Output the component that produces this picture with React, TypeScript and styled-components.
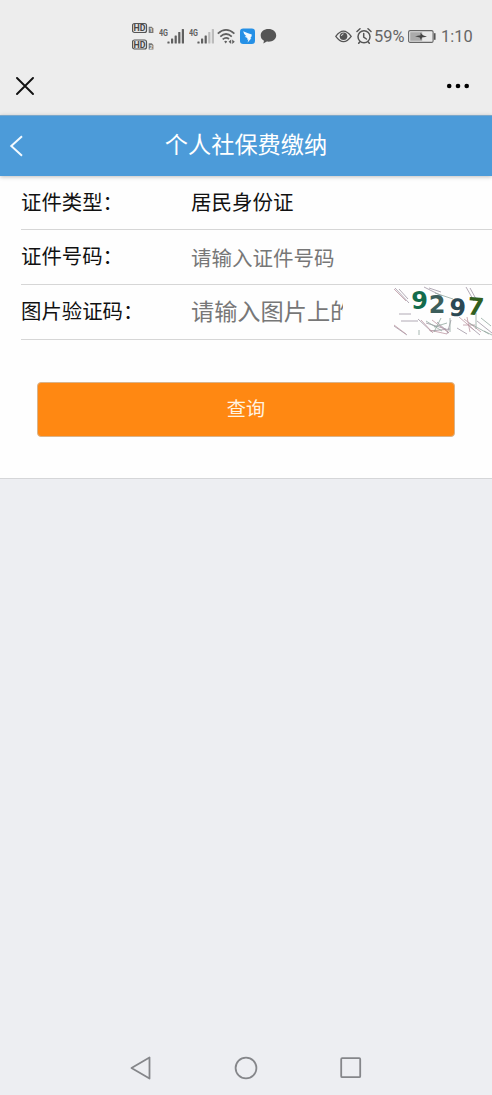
import React from 'react';
import styled, { createGlobalStyle } from 'styled-components';

const GlobalStyle = createGlobalStyle`
  * { box-sizing: border-box; }
  body {
    margin: 0;
    background: #edeef2;
    font-family: 'Noto Sans CJK SC', sans-serif;
  }
`;

const Screen = styled.div`
  width: 100%;
  height: 1095px;
  display: flex;
  flex-direction: column;
  background: #edeef2;
  overflow: hidden;
`;

const StatusBar = styled.div`
  height: 58px;
  padding: 22px 19px 6px 132px;
  display: flex;
  justify-content: space-between;
  background: #ededed;
`;

const StatusGroup = styled.div`
  display: flex;
  height: 30px;
`;

const StatusIcon = styled.svg<{ $gap?: number }>`
  display: block;
  flex: none;
  height: 30px;
  margin-left: ${(p) => p.$gap ?? 0}px;
`;

const StatusText = styled.span<{ $width: number; $gap: number }>`
  width: ${(p) => p.$width}px;
  margin-left: ${(p) => p.$gap}px;
  font: 400 16.4px/30px Roboto, sans-serif;
  color: #666;
  white-space: nowrap;
`;

const BrowserBar = styled.div`
  height: 57px;
  padding: 0 22px 2px 16px;
  display: flex;
  align-items: center;
  justify-content: space-between;
  background: #ededed;
`;

const Header = styled.header`
  height: 61px;
  flex: none;
  display: grid;
  grid-template-columns: 40px 1fr 40px;
  align-items: center;
  background: #4c9bd9;
  border-top: 1px solid #7ba8cb;
  box-shadow: 0 1px 4px rgba(0, 0, 0, 0.25);
  z-index: 1;
`;

const BackIcon = styled.svg`
  display: block;
  margin-left: 9px;
`;

const Title = styled.h1`
  margin: 0;
  padding-bottom: 7px;
  font-size: 23.2px;
  line-height: 34px;
  font-weight: 400;
  text-align: center;
  color: #fff;
`;

const Form = styled.main`
  height: 303px;
  flex: none;
  background: #fefefe;
  border-bottom: 1px solid #d5d6d8;
`;

const Row = styled.div<{ $height?: number }>`
  height: ${(p) => p.$height ?? 55}px;
  margin-left: 21px;
  display: flex;
  align-items: center;
  border-bottom: 1px solid #d6d6d6;
`;

const Label = styled.label`
  width: 170px;
  font-size: 20.4px;
  line-height: 30px;
  color: #111;
  white-space: nowrap;
  padding-bottom: 4px;
`;

const Value = styled.div<{ $hint?: boolean; $large?: boolean }>`
  width: ${(p) => (p.$large ? '152px' : 'auto')};
  overflow: hidden;
  white-space: nowrap;
  font-size: ${(p) => (p.$large ? 23.2 : 20.5)}px;
  line-height: 34px;
  padding-bottom: ${(p) => (p.$hint && !p.$large ? 1 : 4)}px;
  color: ${(p) => (p.$hint ? '#777' : '#111')};
`;

const Captcha = styled.svg`
  display: block;
  margin-left: auto;
`;

const SubmitButton = styled.button`
  display: block;
  width: 418px;
  height: 55px;
  margin: 42px 0 0 37px;
  padding: 0 0 3px;
  border: 1px solid #d9b48c;
  border-radius: 4px;
  background: #ff8812;
  color: #fff4e2;
  font: 400 19.2px/30px 'Noto Sans CJK SC', sans-serif;
`;

const NavBar = styled.nav`
  margin-top: auto;
  height: 54px;
  padding: 0 130px;
  display: flex;
  align-items: center;
  justify-content: space-between;
`;

const HdBadges = () => (
  <StatusIcon width="23" viewBox="0 0 23 30">
    {[1, 17.5].map((y, i) => (
      <g key={y}>
        <rect x="0.5" y={y + 0.5} width="14" height="9" rx="2" fill="#e4e4e4" stroke="#555" strokeWidth="1.2" />
        <text x="7.5" y={y + 8.3} textAnchor="middle" fontFamily="Roboto, sans-serif" fontSize="8.8" fontWeight="700" fill="#484848">HD</text>
        <path d={`M16.7 ${y + 3.7}h3l1.7 1.7v4.6h-4.7z`} fill="#777" />
        <text x="19" y={y + 9.2} textAnchor="middle" fontFamily="Roboto, sans-serif" fontSize="5.5" fontWeight="700" fill="#eee">{i + 1}</text>
      </g>
    ))}
  </StatusIcon>
);

const Signal = ({ strength, gap }: { strength: number; gap: number }) => (
  <StatusIcon width="25" viewBox="0 0 25 30" $gap={gap}>
    <text x="0" y="14" textLength="9" lengthAdjust="spacingAndGlyphs" fontFamily="Roboto, sans-serif" fontSize="9" fontWeight="700" fill="#606060">4G</text>
    {[2, 5, 8, 11.5, 14.5].map((h, i) => (
      <rect key={h} x={8.4 + i * 3.6} y={21.5 - h} width="2.2" height={h} rx="0.5" fill={i < strength ? '#606060' : '#bcbcbc'} />
    ))}
  </StatusIcon>
);

const Wifi = () => (
  <StatusIcon width="19" viewBox="0 0 19 30" $gap={3}>
    <g fill="none" stroke="#606060" strokeWidth="1.7">
      <path d="M0.8 11.6Q9 4.2 17.4 11.6" />
      <path d="M3.3 14.6Q9 9.4 14.8 14.6" />
      <path d="M5.7 17.4Q9 14.4 12 17" />
    </g>
    <path d="M7.2 19.6Q8.7 18 10.2 19.6L8.7 21.4z" fill="#606060" />
    <path d="M14.2 17.5v4.4l-2.6-2.2zM15.2 17.5v4.4l2.6-2.2z" fill="#606060" />
  </StatusIcon>
);

const digits = [
  { char: '9', x: 28.5, y: 24, color: '#136b4c', rotate: 0 },
  { char: '2', x: 46, y: 28, color: '#3c5e5b', rotate: 0 },
  { char: '9', x: 66, y: 31, color: '#2b4854', rotate: 4 },
  { char: '7', x: 84, y: 30, color: '#315f1e', rotate: 5 },
];

const App = () => (
  <>
    <GlobalStyle />
    <Screen>
      <StatusBar>
        <StatusGroup>
          <HdBadges />
          <Signal strength={5} gap={4} />
          <Signal strength={3} gap={5} />
          <Wifi />
          <StatusIcon width="15" viewBox="0 0 15 30" $gap={4}>
            <rect y="6.5" width="15" height="15.5" rx="3.2" fill="#2590e6" />
            <path d="M3.2 9.3Q7.3 11.4 11.8 12.4Q12 14.2 10.2 16.3H11.4L7.6 20.4L8.4 17.4H7L7.5 16Q5.2 15.6 4.8 14.3L6.4 14.2Q3.7 12.7 3.2 9.3z" fill="#f3faff" />
          </StatusIcon>
          <StatusIcon width="17" viewBox="0 0 17 30" $gap={5}>
            <path d="M8.5 7C4 7 .7 9.7.7 13.4c0 2.4 1.3 4.2 3.3 5.3l-.7 2.9 3.5-2.1c5 .8 9.4-1.9 9.4-6.1C16.2 9.7 12.8 7 8.5 7z" fill="#555" />
          </StatusIcon>
        </StatusGroup>
        <StatusGroup>
          <StatusIcon width="17" viewBox="0 0 17 30">
            <path d="M.8 14.3Q8.5 3.8 16.2 14.3Q8.5 24.8.8 14.3z" fill="none" stroke="#555" strokeWidth="1.3" />
            <circle cx="8.5" cy="14.2" r="3.8" fill="#555" />
            <path d="M6.5 14a2.2 2.2 0 0 1 2-2.1" fill="none" stroke="#ddd" strokeWidth="1" />
          </StatusIcon>
          <StatusIcon width="16" viewBox="0 0 16 30" $gap={4}>
            <g fill="none" stroke="#555" strokeWidth="1.5" strokeLinecap="round">
              <circle cx="8" cy="14.8" r="6" />
              <path d="M1 9.5l3-2.7M15 9.5l-3-2.7M7.7 11.5v3.7l2.7 1.8M3.7 20l-1 1.3M12.3 20l1 1.3" />
            </g>
          </StatusIcon>
          <StatusText $width={31} $gap={2}>59%</StatusText>
          <StatusIcon width="29" viewBox="0 0 29 30" $gap={3}>
            <rect x=".6" y="8.6" width="24.5" height="11.8" rx="1.5" fill="#e8e8e8" stroke="#666" strokeWidth="1.1" />
            <rect x="2.2" y="10.2" width="12" height="8.6" fill="#aaa" />
            <path d="M26.7 11.2v6.6" stroke="#555" strokeWidth="1.7" />
            <path d="M7 14.2L12.5 13.2V10.8L15 13.2L19 14.7L14 15.6L13 18.2L11.8 15.4z" fill="#444" />
          </StatusIcon>
          <StatusText $width={32} $gap={4}>1:10</StatusText>
        </StatusGroup>
      </StatusBar>
      <BrowserBar>
        <svg width="18" height="18" viewBox="0 0 18 18">
          <path d="M1 1l16 16M17 1L1 17" stroke="#111" strokeWidth="1.9" strokeLinecap="round" />
        </svg>
        <svg width="24" height="6" viewBox="0 0 24 6">
          <circle cx="3.2" cy="3" r="2.3" /><circle cx="12" cy="3" r="2.3" /><circle cx="20.7" cy="3" r="2.3" />
        </svg>
      </BrowserBar>
      <Header>
        <BackIcon width="15" height="22" viewBox="0 0 15 22">
          <path d="M13 1.3L2.3 11L13 20.7" fill="none" stroke="#f3faff" strokeWidth="2" />
        </BackIcon>
        <Title>个人社保费缴纳</Title>
      </Header>
      <Form>
        <Row $height={54}>
          <Label>证件类型：</Label>
          <Value>居民身份证</Value>
        </Row>
        <Row>
          <Label>证件号码：</Label>
          <Value $hint>请输入证件号码</Value>
        </Row>
        <Row>
          <Label>图片验证码：</Label>
          <Value $hint $large>请输入图片上的</Value>
          <Captcha width="101" height="54" viewBox="0 0 101 54">
            <g fill="none" strokeWidth="0.8" opacity="0.75">
              <path stroke="#817486" d="M4 3l14 15M8 4l9 10M33 2l18 9M38 3l12 4M75 2l8 14M79 3l6 11M8 29h12M10 36h17M3 41l13 9M27 34l14 13M35 38l20 6M46 37l12 11M39 46l20-2M60 35l-4 14M77 40l12 10M86 36l15 12M66 43l10 6" />
              <path stroke="#a87787" d="M3 4l12 12M3 40l12 9M30 35l12 13M41 35l17 13M38 45l18 4M73 34l17 13M68 32l15 13M72 40h12M76 32l3 15" />
              <path stroke="#708b80" d="M35 36l16 10M50 33l-7 14M59 33v14M85 28v16M78 38l20 11M90 33l10 8M44 8l18 6M43 42l13-4M28 45v5M93 46l8 4" />
            </g>
            {digits.map((d) => (
              <text
                key={d.x}
                x={d.x}
                y={d.y}
                textAnchor="middle"
                transform={`rotate(${d.rotate} ${d.x} ${d.y})`}
                fontFamily="'DejaVu Sans', sans-serif"
                fontSize="24"
                fontWeight="700"
                fill={d.color}
              >
                {d.char}
              </text>
            ))}
          </Captcha>
        </Row>
        <SubmitButton type="button">查询</SubmitButton>
      </Form>
      <NavBar>
        <svg width="22" height="24" viewBox="0 0 22 24">
          <path d="M19.5 1.5v21L1.5 12z" fill="none" stroke="#85868a" strokeWidth="1.8" strokeLinejoin="round" />
        </svg>
        <svg width="24" height="24" viewBox="0 0 24 24">
          <circle cx="12" cy="12" r="10.4" fill="none" stroke="#85868a" strokeWidth="1.8" />
        </svg>
        <svg width="22" height="22" viewBox="0 0 22 22">
          <rect x="1.2" y="1.2" width="19" height="19" rx="1" fill="none" stroke="#85868a" strokeWidth="1.8" />
        </svg>
      </NavBar>
    </Screen>
  </>
);

export default App;
